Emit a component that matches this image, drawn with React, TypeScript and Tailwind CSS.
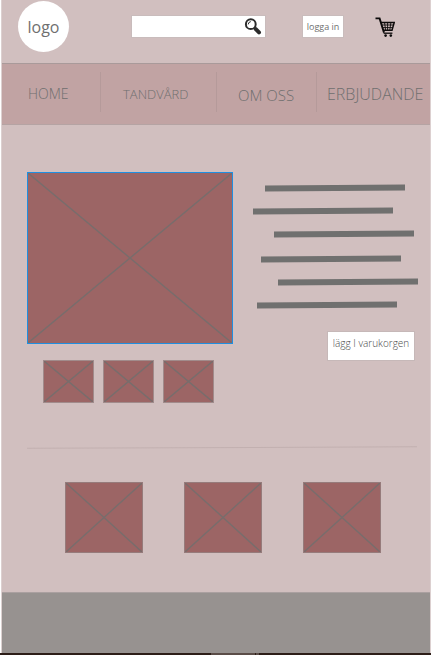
type CrossBoxProps = { className: string; label: string };

function CrossBox({ className, label }: CrossBoxProps) {
  return (
    <svg
      role="img"
      aria-label={label}
      viewBox="0 0 100 100"
      preserveAspectRatio="none"
      className={`block shrink-0 border bg-[#9c6565] ${className}`}
    >
      <path
        d="M0 0L100 100M100 0L0 100"
        fill="none"
        stroke="#786d6c"
        strokeWidth="1.4"
        vectorEffect="non-scaling-stroke"
      />
    </svg>
  );
}

function SearchIcon() {
  return (
    <svg viewBox="0 0 18 18" className="h-[18px] w-[18px]" aria-hidden="true">
      <circle cx="6.8" cy="6.2" r="4.9" fill="#fff" stroke="#2b2b2b" strokeWidth="2" />
      <path d="M4.2 6.4Q4.4 3.9 6.8 3.6" fill="none" stroke="#2b2b2b" strokeWidth="1" />
      <path d="M10 9.6L11.6 11.2" stroke="#2b2b2b" strokeWidth="2" />
      <path d="M11.8 11.2L15 14.4" stroke="#2b2b2b" strokeWidth="4" strokeLinecap="round" />
    </svg>
  );
}

function CartIcon() {
  return (
    <svg viewBox="0 0 20 20" className="h-5 w-5" fill="none" stroke="#0c0a0a" aria-hidden="true">
      <path d="M0.5 1.4H4.6L9 15.6" strokeWidth="1.9" />
      <path d="M6 5.6H19.2L17 13.2H8.4" strokeWidth="1.5" />
      <path d="M7 8H18.2M7.6 10.6H17.4M9.6 6L10.6 13M12.6 6V13M15.8 6L14.8 13" strokeWidth="0.9" />
      <path d="M8.6 16.2H17.4" strokeWidth="1.3" />
      <circle cx="10.6" cy="18.6" r="1.3" fill="#0c0a0a" stroke="none" />
      <circle cx="15.8" cy="18.6" r="1.3" fill="#0c0a0a" stroke="none" />
    </svg>
  );
}

const bar = "h-[6px] w-[140px] -rotate-[0.5deg] bg-[#70706f]";

export default function App() {
  return (
    <div className="bg-white pl-px font-['Open_Sans','Noto_Sans',sans-serif] text-[#6f6f6f]">
      <div className="border-x border-[#dcd0d0] bg-[#d1bfbf]">
        <header className="flex h-[63px] items-start pl-4">
          <a
            href="#"
            className="mt-px flex h-[51px] w-[51px] shrink-0 items-center justify-center rounded-full bg-white text-base leading-5"
          >
            logo
          </a>
          <form className="mt-[15px] ml-[62px] flex h-[23px] w-[135px] shrink-0 items-center border border-[#c9bcbc] bg-white pr-[3px]">
            <input type="search" aria-label="Sök" className="h-full min-w-0 flex-1 bg-transparent px-1 text-xs outline-none" />
            <button type="submit" aria-label="Sök">
              <SearchIcon />
            </button>
          </form>
          <button
            type="button"
            className="mt-[15px] ml-9 h-[23px] w-[42px] shrink-0 border border-[#c9bcbc] bg-white text-[9px] leading-5 whitespace-nowrap"
          >
            logga in
          </button>
          <a href="#" aria-label="Varukorg" className="mt-[17px] ml-[31px] shrink-0">
            <CartIcon />
          </a>
        </header>

        <nav className="grid h-[62px] grid-cols-[99fr_116fr_100fr_113fr] items-start border-y border-t-[#a99a9a] border-b-[#b5a3a3] bg-[#c1a3a3] pt-2 font-light whitespace-nowrap">
          <a href="#" className="h-10 border-r border-[#b59a9a] pt-3 pl-[26px] text-sm leading-5">HOME</a>
          <a href="#" className="h-10 border-r border-[#b59a9a] pt-3 pl-[22px] text-[13px] leading-5">TANDVÅRD</a>
          <a href="#" className="h-10 border-r border-[#b59a9a] pt-[13px] pl-[21px] text-[15px] leading-5">OM OSS</a>
          <a href="#" className="h-10 pt-3 pl-[10px] text-base leading-5">ERBJUDANDE</a>
        </nav>

        <main className="px-[25px] pt-[47px] pb-[39px]">
          <section className="flex">
            <div className="shrink-0">
              <CrossBox label="Produktbild" className="h-[172px] w-[206px] border-[#1f8fe0]" />
              <div className="mt-4 flex gap-[9px] pl-4">
                <CrossBox label="Miniatyr 1" className="h-[43px] w-[51px] border-[#a18b8b]" />
                <CrossBox label="Miniatyr 2" className="h-[43px] w-[51px] border-[#a18b8b]" />
                <CrossBox label="Miniatyr 3" className="h-[43px] w-[51px] border-[#a18b8b]" />
              </div>
            </div>
            <div className="flex flex-1 flex-col pt-[13px] pl-5">
              <div className="flex flex-col gap-[17px]">
                <div className={`${bar} ml-3`} />
                <div className={bar} />
                <div className={`${bar} ml-[21px]`} />
              </div>
              <div className="mt-[19px] flex flex-col gap-[17px]">
                <div className={`${bar} ml-2`} />
                <div className={`${bar} ml-[25px]`} />
                <div className={`${bar} ml-1`} />
              </div>
              <button
                type="button"
                className="mt-[23px] ml-[74px] h-[30px] w-[88px] border border-[#c6b8b8] bg-white pb-[6px] text-[10px] leading-4 font-light whitespace-nowrap text-[#4a4a4a]"
              >
                lägg I varukorgen
              </button>
            </div>
          </section>

          <hr className="mt-11 mr-[-13px] max-w-[390px] -rotate-[0.2deg] border-[#c2b0b0]" />

          <section className="mt-[34px] flex gap-[41px] pl-[38px]">
            <CrossBox label="Relaterad produkt 1" className="h-[71px] w-[78px] border-[#967b7b]" />
            <CrossBox label="Relaterad produkt 2" className="h-[71px] w-[78px] border-[#967b7b]" />
            <CrossBox label="Relaterad produkt 3" className="h-[71px] w-[78px] border-[#967b7b]" />
          </section>
        </main>

        <footer className="h-[61px] border-t border-[#aaa0a0] bg-[#979290]" />
      </div>
      <div className="-ml-px flex h-[2px] bg-[#2c1d17] pl-[49%]">
        <div className="w-11 bg-[#5b4d48]" />
        <div className="ml-px w-[3px] bg-[#5b4d48]" />
      </div>
    </div>
  );
}
